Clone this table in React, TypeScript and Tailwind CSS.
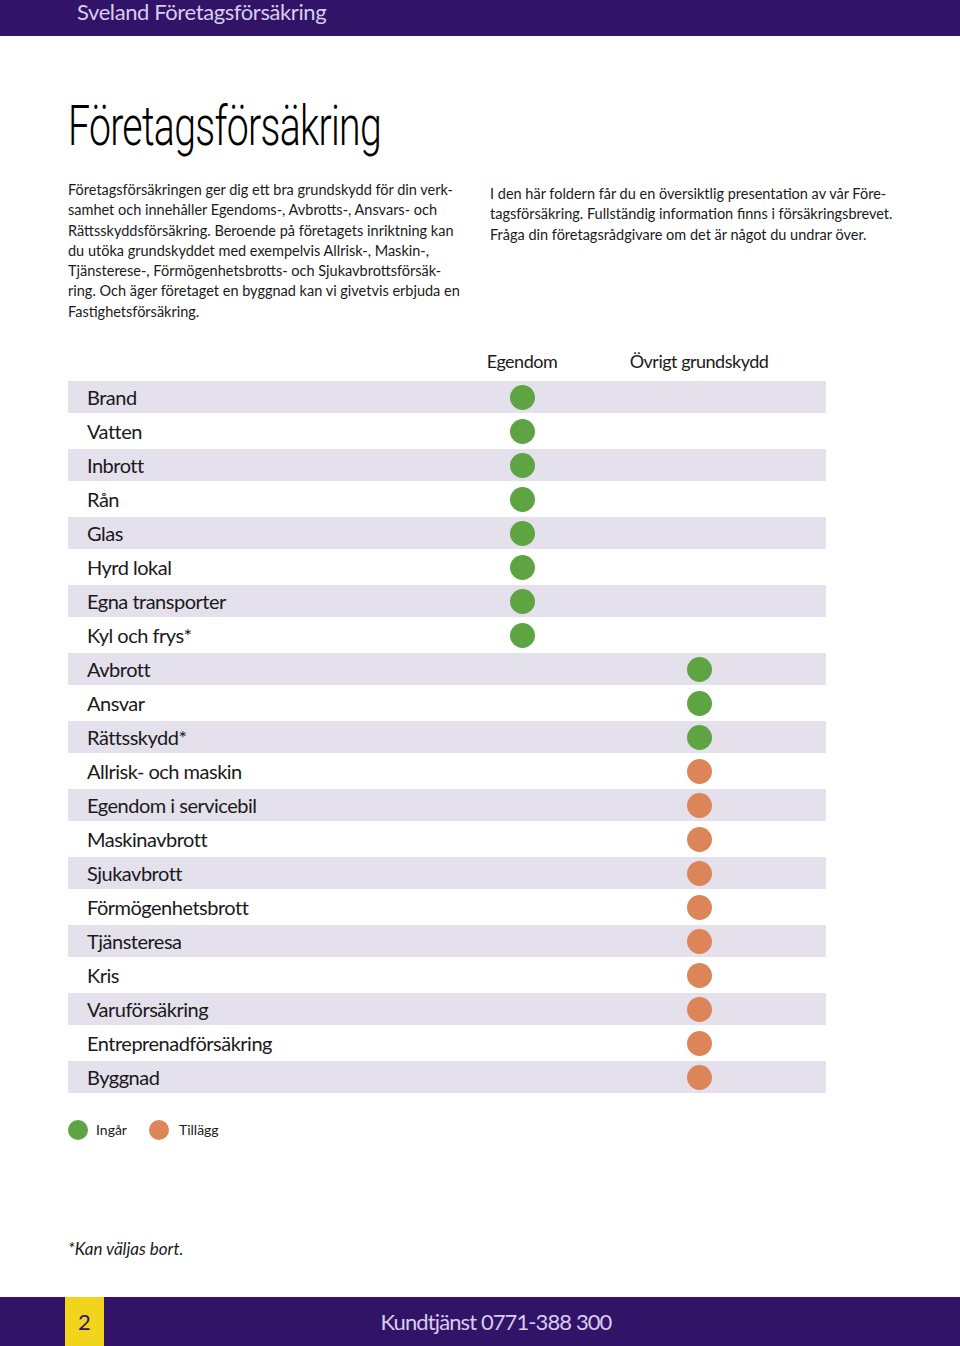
import React from "react"

type Mark = "in" | "add"

interface Row {
  label: string
  egendom?: Mark
  ovrigt?: Mark
}

const rows: Row[] = [
  { label: "Brand", egendom: "in" },
  { label: "Vatten", egendom: "in" },
  { label: "Inbrott", egendom: "in" },
  { label: "Rån", egendom: "in" },
  { label: "Glas", egendom: "in" },
  { label: "Hyrd lokal", egendom: "in" },
  { label: "Egna transporter", egendom: "in" },
  { label: "Kyl och frys*", egendom: "in" },
  { label: "Avbrott", ovrigt: "in" },
  { label: "Ansvar", ovrigt: "in" },
  { label: "Rättsskydd*", ovrigt: "in" },
  { label: "Allrisk- och maskin", ovrigt: "add" },
  { label: "Egendom i servicebil", ovrigt: "add" },
  { label: "Maskinavbrott", ovrigt: "add" },
  { label: "Sjukavbrott", ovrigt: "add" },
  { label: "Förmögenhetsbrott", ovrigt: "add" },
  { label: "Tjänsteresa", ovrigt: "add" },
  { label: "Kris", ovrigt: "add" },
  { label: "Varuförsäkring", ovrigt: "add" },
  { label: "Entreprenadförsäkring", ovrigt: "add" },
  { label: "Byggnad", ovrigt: "add" },
]

const font = "font-['Lato','Open_Sans',sans-serif]"

function Dot({ mark, size = "w-[25px] h-[25px]" }: { mark?: Mark; size?: string }) {
  if (!mark) return null
  return (
    <span
      className={`block rounded-full ${size} ${mark === "in" ? "bg-[#5ea443]" : "bg-[#dc8558]"}`}
    />
  )
}

export default function App() {
  return (
    <div className={`w-[960px] h-[1346px] bg-white flex flex-col text-[#1a1a1a] ${font}`}>
      {/* top bar */}
      <header className="h-[36px] bg-[#311467] pl-[77px] shrink-0">
        <span className="block text-[22px] leading-[24px] text-[#d8ccef] tracking-[-0.4px]">
          Sveland Företagsförsäkring
        </span>
      </header>

      <main className="flex-1 px-[68px] flex flex-col">
        <h1 className="mt-[62px] h-[56px] text-[56px] leading-[56px] font-light font-['Roboto',sans-serif] origin-left scale-x-[0.7] whitespace-nowrap tracking-[-1px] text-black">
          Företagsförsäkring
        </h1>

        <div className="mt-[26px] flex gap-[28px] text-[14.5px] leading-[20.3px]">
          <p className="w-[394px] shrink-0 whitespace-nowrap">
            Företagsförsäkringen ger dig ett bra grundskydd för din verk-
            <br />
            samhet och innehåller Egendoms-, Avbrotts-, Ansvars- och
            <br />
            Rättsskyddsförsäkring. Beroende på företagets inriktning kan
            <br />
            du utöka grundskyddet med exempelvis Allrisk-, Maskin-,
            <br />
            Tjänsterese-, Förmögenhetsbrotts- och Sjukavbrottsförsäk-
            <br />
            ring. Och äger företaget en byggnad kan vi givetvis erbjuda en
            <br />
            Fastighetsförsäkring.
          </p>
          <p className="mt-[4px] whitespace-nowrap">
            I den här foldern får du en översiktlig presentation av vår Före-
            <br />
            tagsförsäkring. Fullständig information finns i försäkringsbrevet.
            <br />
            Fråga din företagsrådgivare om det är något du undrar över.
          </p>
        </div>

        {/* table */}
        <div className="mt-[20px] w-[758px] text-[20px] tracking-[-0.5px]">
          <div className="flex h-[39px] items-center text-[18px]">
            <div className="w-[384px]" />
            <div className="w-[140px] text-center">Egendom</div>
            <div className="w-[214px] text-center whitespace-nowrap">Övrigt grundskydd</div>
          </div>
          {rows.map((r, i) => (
            <div
              key={r.label}
              className={`flex items-center ${i % 2 === 0 ? "h-[32px] bg-[#e4e0ec]" : "h-[36px]"}`}
            >
              <div className="w-[384px] pl-[19px] whitespace-nowrap">{r.label}</div>
              <div className="w-[140px] flex justify-center">
                <Dot mark={r.egendom} />
              </div>
              <div className="w-[214px] flex justify-center">
                <Dot mark={r.ovrigt} />
              </div>
            </div>
          ))}
        </div>

        {/* legend */}
        <div className="mt-[26px] flex items-center text-[14px]">
          <Dot mark="in" size="w-[20px] h-[20px]" />
          <span className="ml-[8px]">Ingår</span>
          <span className="ml-[22px]">
            <Dot mark="add" size="w-[20px] h-[20px]" />
          </span>
          <span className="ml-[10px]">Tillägg</span>
        </div>

        <p className="mt-[96px] text-[17px] italic">*Kan väljas bort.</p>
      </main>

      {/* footer */}
      <footer className="h-[49px] bg-[#311467] shrink-0 flex">
        <div className="ml-[65px] w-[39px] bg-[#f1d51d] flex items-center justify-center text-[22px] text-[#311467]">
          2
        </div>
        <div className="flex-1 flex items-center justify-center pr-[72px] text-[22px] text-[#d8ccef] tracking-[-0.9px]">
          Kundtjänst 0771-388 300
        </div>
      </footer>
    </div>
  )
}
